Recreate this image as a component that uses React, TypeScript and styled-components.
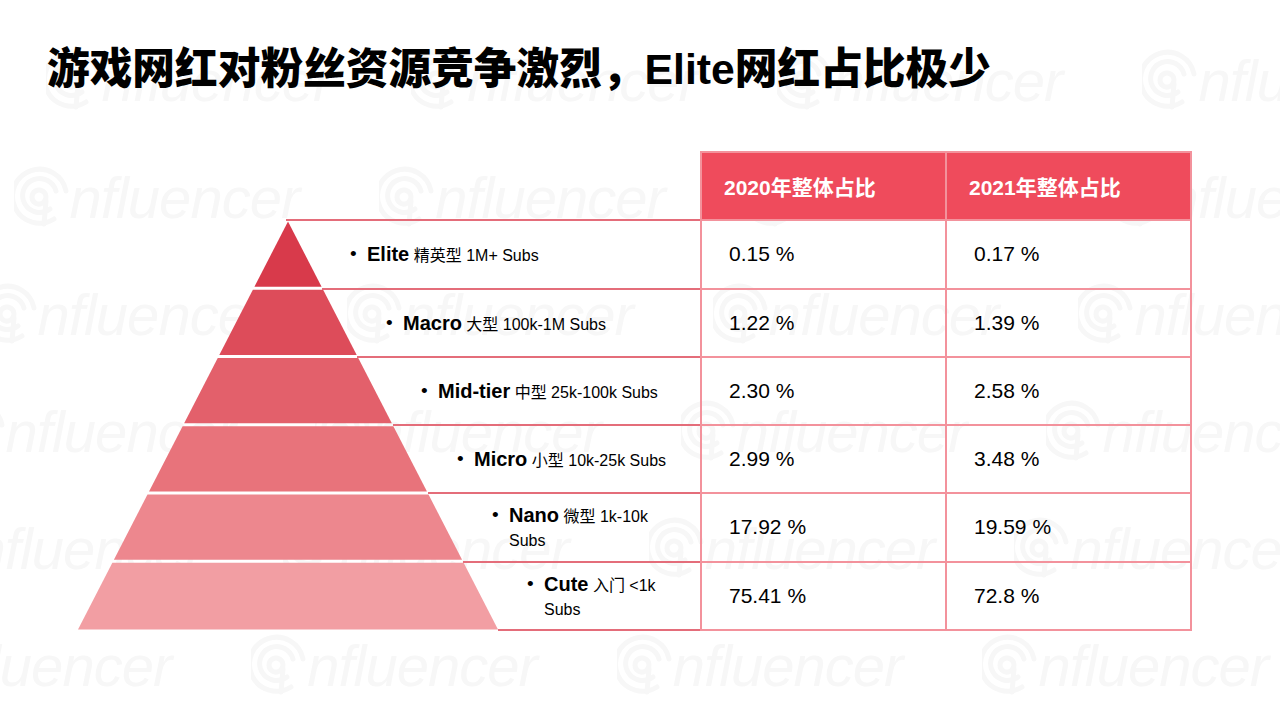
import React from "react";
import styled, { createGlobalStyle } from "styled-components";

const GlobalStyle = createGlobalStyle`
  html, body {
    margin: 0;
    padding: 0;
    background: #ffffff;
  }
  body {
    font-family: "Liberation Sans", "Noto Sans CJK SC", sans-serif;
    color: #000;
  }
`;

const LINE = "#e46d7a";
const GRID = "#f3929c";

const Page = styled.div`
  position: relative;
  width: 1280px;
  height: 720px;
  overflow: hidden;
  background: #fff;
`;

const WatermarkLayer = styled.div`
  position: absolute;
  inset: 0;
  z-index: 0;
  display: flex;
  flex-direction: column;
  gap: 47px;
  padding-top: 40px;
  pointer-events: none;
`;

const WatermarkRow = styled.div<{ $offset: number }>`
  display: flex;
  gap: 80px;
  height: 70px;
  margin-left: ${(p) => p.$offset}px;
`;

const Mark = styled.div`
  flex: 0 0 280px;
  display: flex;
  align-items: flex-end;
  gap: 0;
  color: #f7f7f7;
  font-family: "Liberation Sans", sans-serif;
  font-style: italic;
  font-size: 58px;
  line-height: 1;
  letter-spacing: -1px;
  white-space: nowrap;
`;

const Content = styled.div`
  position: relative;
  z-index: 1;
  display: flex;
  flex-direction: column;
  padding: 44px 0 0 47px;
`;

const Title = styled.h1`
  margin: 0;
  font-family: "Liberation Sans", "Noto Sans CJK SC", sans-serif;
  font-size: 42.7px;
  line-height: 51px;
  font-weight: 900;
  color: #000;
  white-space: nowrap;
`;

const Body = styled.div`
  display: flex;
  align-items: flex-start;
  margin: 56px 0 0 31px;
`;

const TierPanel = styled.div`
  display: grid;
  width: 622px;
  margin-top: 68.25px;
  & > * {
    grid-area: 1 / 1;
  }
`;

const PyramidSvg = styled.svg`
  display: block;
`;

const TierList = styled.ul`
  list-style: none;
  margin: 0;
  padding: 0;
  display: flex;
  flex-direction: column;
`;

const TierRow = styled.li<{ $indent: number }>`
  box-sizing: border-box;
  height: 68.25px;
  margin-left: ${(p) => p.$indent}px;
  border-top: 2px solid ${LINE};
  display: flex;
  align-items: center;
  padding: 0 22px 0 64px;
`;

const TierBase = styled.li`
  margin-left: 420px;
  border-top: 2px solid ${LINE};
`;

const TierLabel = styled.div`
  display: flex;
  align-items: flex-start;
  margin-top: 2px;
`;

const Bullet = styled.span`
  flex: 0 0 17px;
  font-size: 19px;
  line-height: 24px;
`;

const TierText = styled.span`
  font-size: 16px;
  line-height: 24px;
`;

const TierName = styled.b`
  font-size: 20px;
  font-weight: 700;
`;

const Table = styled.div`
  display: grid;
  grid-template-columns: 245px 245px;
  grid-auto-rows: 68.25px;
  border: 1px solid ${GRID};
`;

const Cell = styled.div<{ $head?: boolean }>`
  box-sizing: border-box;
  border: 1px solid ${GRID};
  display: flex;
  align-items: center;
  padding-left: ${(p) => (p.$head ? 22 : 27)}px;
  font-size: 21px;
  font-weight: ${(p) => (p.$head ? 700 : 400)};
  color: ${(p) => (p.$head ? "#fff" : "#000")};
  background: ${(p) => (p.$head ? "#ef4b5c" : "transparent")};
`;

const tiers = [
  { name: "Elite", desc: "精英型 1M+ Subs", a: "0.15 %", b: "0.17 %" },
  { name: "Macro", desc: "大型 100k-1M Subs", a: "1.22 %", b: "1.39 %" },
  { name: "Mid-tier", desc: "中型 25k-100k Subs", a: "2.30 %", b: "2.58 %" },
  { name: "Micro", desc: "小型 10k-25k Subs", a: "2.99 %", b: "3.48 %" },
  { name: "Nano", desc: "微型 1k-10k Subs", a: "17.92 %", b: "19.59 %" },
  { name: "Cute", desc: "入门 <1k Subs", a: "75.41 %", b: "72.8 %" },
];

const bandColors = ["#d83a4b", "#dd4c5a", "#e3606b", "#e8737b", "#ed878e", "#f29ea3"];

const ROW = 68.25;
const CX = 210;
const APEX = 2.5;
const BASE = 410.5;
const SLOPE = 210 / (BASE - APEX);

const edge = (y: number) => SLOPE * (y - APEX);

const Pyramid = () => (
  <PyramidSvg width={622} height={413} viewBox="0 0 622 413">
    {bandColors.map((c, i) => {
      const top = i === 0 ? APEX : ROW * i + 1 + 1.5;
      const bot = i === 5 ? BASE : ROW * (i + 1) + 1 - 1.5;
      const t = edge(top);
      const b = edge(bot);
      const pts =
        i === 0
          ? `${CX},${top} ${CX + b},${bot} ${CX - b},${bot}`
          : `${CX - t},${top} ${CX + t},${top} ${CX + b},${bot} ${CX - b},${bot}`;
      return <polygon key={c} points={pts} fill={c} />;
    })}
  </PyramidSvg>
);

// faint "influencer" mark: concentric arcs wrapped round the i stem
const Logo = () => (
  <svg width="56" height="66" viewBox="0 0 56 66" fill="none" stroke="currentColor" strokeWidth="5" strokeLinecap="round">
    <path d="M40 58 A27 27 0 1 1 52 30" />
    <path d="M36 48 A17 17 0 1 1 42 30" />
    <path d="M32 36 A7 7 0 1 0 32 36.1" />
    <path d="M32 40 L30 63" />
  </svg>
);

const watermarkRows = [0, 1, 2, 3, 4, 5];

export default function App() {
  return (
    <>
      <GlobalStyle />
      <Page>
        <WatermarkLayer aria-hidden="true">
          {watermarkRows.map((r) => (
            <WatermarkRow key={r} $offset={40 - 32 * r - 360}>
              {[0, 1, 2, 3, 4, 5].map((k) => (
                <Mark key={k}>
                  <Logo />
                  nfluencer
                </Mark>
              ))}
            </WatermarkRow>
          ))}
        </WatermarkLayer>
        <Content>
          <Title>游戏网红对粉丝资源竞争激烈，Elite网红占比极少</Title>
          <Body>
            <TierPanel>
              <Pyramid />
              <TierList>
                {tiers.map((t, i) => (
                  <TierRow key={t.name} $indent={i === 0 ? 208 : Math.round(CX + edge(ROW * i + 1))}>
                    <TierLabel>
                      <Bullet>•</Bullet>
                      <TierText>
                        <TierName>{t.name}</TierName> {t.desc}
                      </TierText>
                    </TierLabel>
                  </TierRow>
                ))}
                <TierBase />
              </TierList>
            </TierPanel>
            <Table>
              <Cell $head>2020年整体占比</Cell>
              <Cell $head>2021年整体占比</Cell>
              {tiers.map((t) => (
                <React.Fragment key={t.name}>
                  <Cell>{t.a}</Cell>
                  <Cell>{t.b}</Cell>
                </React.Fragment>
              ))}
            </Table>
          </Body>
        </Content>
      </Page>
    </>
  );
}
